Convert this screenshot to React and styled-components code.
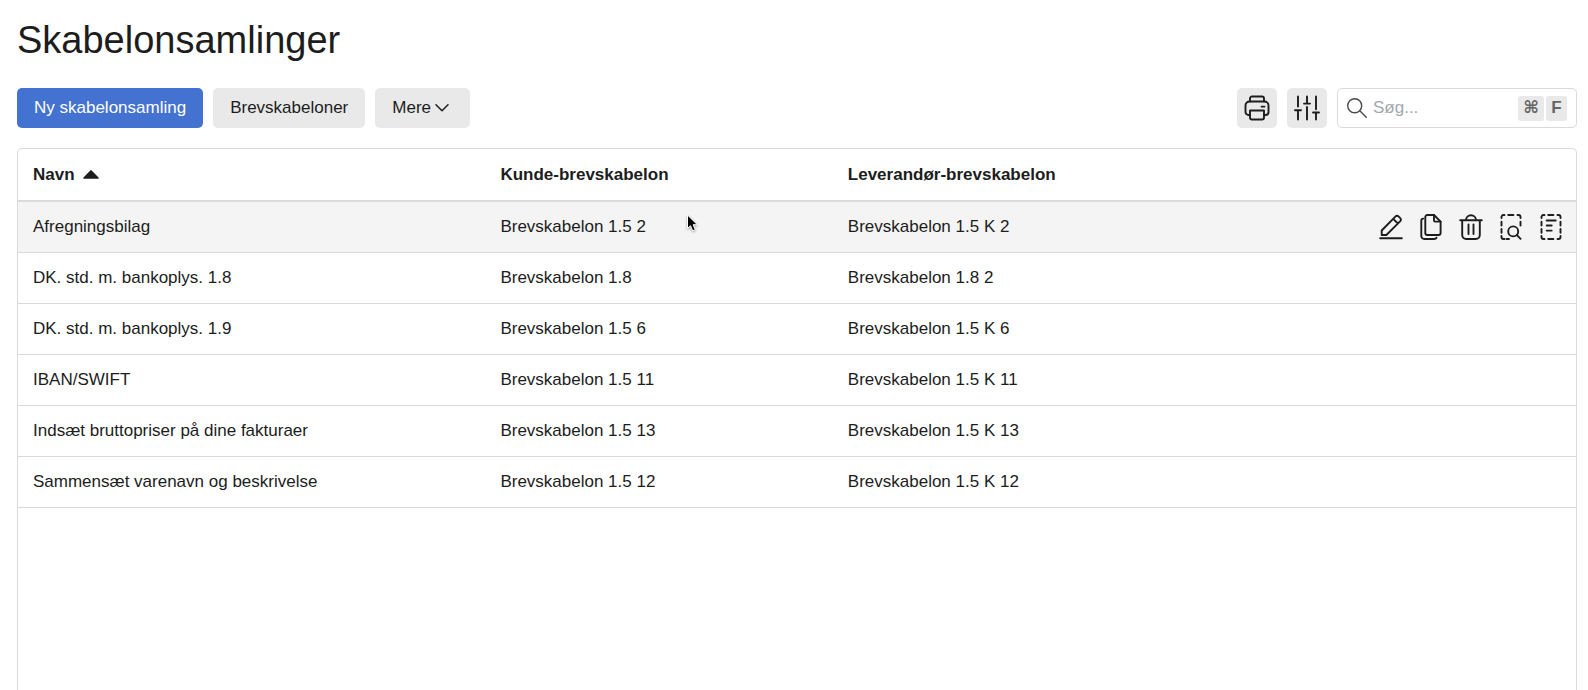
import React, { useState } from "react";
import styled, { createGlobalStyle, css } from "styled-components";

const color = {
  text: "#1c1d1c",
  line: "#dadada",
  control: "#e9e9e9",
  hover: "#f4f4f4",
  primary: "#4472d0",
  muted: "#a3a7af",
  icon: "#4a4a4a",
  key: "#666666",
};

const GlobalStyle = createGlobalStyle`
  *, *::before, *::after { box-sizing: border-box; }
  body {
    margin: 0;
    background: #fff;
    color: ${color.text};
    font: 17px/24px "Liberation Sans", Helvetica, Arial, sans-serif;
  }
  button, input { font: inherit; color: inherit; }
`;

const Page = styled.main`
  display: flex;
  flex-direction: column;
  min-height: 100vh;
  padding: 16px 11px 0 17px;
`;

const Title = styled.h1`
  margin: 0 0 24px;
  font-size: 38px;
  line-height: 48px;
  font-weight: 400;
`;

const Toolbar = styled.div`
  display: flex;
  justify-content: space-between;
  margin-bottom: 20px;
`;

const Group = styled.div`
  display: flex;
  gap: 10px;
`;

const Button = styled.button`
  display: flex;
  align-items: center;
  gap: 4px;
  height: 40px;
  padding: 0 ${(p) => (p.$menu ? 21 : 17)}px 0 17px;
  border: 0;
  border-radius: 5px;
  cursor: pointer;
  background: ${(p) => (p.$primary ? color.primary : color.control)};
  ${(p) => p.$primary && css`color: #fff;`}
`;

const IconButton = styled.button`
  display: grid;
  place-items: center;
  width: 40px;
  height: 40px;
  padding: 0;
  border: 0;
  border-radius: 5px;
  cursor: pointer;
  background: ${(p) => (p.$plain ? "transparent" : color.control)};
`;

const Icon = styled.svg`
  display: block;
  flex: none;
  fill: none;
  stroke: ${(p) => p.$stroke || "currentColor"};
  stroke-width: ${(p) => p.$weight || 1.9};
  stroke-linecap: round;
  stroke-linejoin: round;
`;

const SearchField = styled.label`
  display: flex;
  align-items: center;
  gap: 6px;
  width: 240px;
  height: 40px;
  padding: 0 9px;
  border: 1px solid ${color.line};
  border-radius: 5px;
`;

const SearchInput = styled.input`
  flex: 1;
  min-width: 0;
  padding: 0;
  border: 0;
  outline: 0;
  background: transparent;
  &::placeholder { color: ${color.muted}; opacity: 1; }
`;

const Keys = styled.span`
  display: flex;
  gap: 2px;
`;

const Key = styled.kbd`
  display: grid;
  place-items: center;
  min-width: 21px;
  height: 25px;
  padding: 0 5px;
  border-radius: 3px;
  background: ${color.control};
  color: ${color.key};
  font: bold 17px/24px "Liberation Sans", "DejaVu Sans", sans-serif;
`;

const Panel = styled.section`
  flex: 1;
  border: 1px solid ${color.line};
  border-bottom: 0;
  border-radius: 5px 5px 0 0;
`;

const Table = styled.table`
  width: 100%;
  table-layout: fixed;
  border-collapse: separate;
  border-spacing: 0;
`;

const Col = styled.col`
  width: ${(p) => p.$width};
`;

const HeadCell = styled.th`
  height: 53px;
  padding: 0 15px;
  border-bottom: 2px solid ${color.line};
  text-align: left;
  font-weight: 700;
`;

const SortButton = styled.button`
  display: flex;
  align-items: center;
  gap: 8px;
  padding: 0;
  border: 0;
  background: none;
  font-weight: 700;
  cursor: pointer;
`;

const Row = styled.tr`
  background: ${(p) => (p.$active ? color.hover : "transparent")};
`;

const Cell = styled.td`
  height: 51px;
  padding: 0 15px;
  border-bottom: 1px solid ${color.line};
`;

const ActionCell = styled(Cell)`
  padding: 0 5px;
`;

const Actions = styled.div`
  display: flex;
  justify-content: flex-end;
`;

const Pointer = styled.svg`
  position: absolute;
  left: 685px;
  top: 213px;
  pointer-events: none;
  filter: drop-shadow(0 1px 1px rgba(0, 0, 0, 0.35));
`;

const ChevronIcon = () => (
  <Icon width="14" height="10" viewBox="0 0 14 10" $weight={1.5} aria-hidden="true">
    <path d="M1 1.8l6 6 6-6" />
  </Icon>
);

const PrintIcon = () => (
  <Icon width="26" height="26" viewBox="-1 -1 26 26" aria-hidden="true">
    <path d="M5 5.5V2.5a2 2 0 0 1 2-2h10a2 2 0 0 1 2 2v3" />
    <path d="M5 19H3.5a3 3 0 0 1-3-3V9.5a4 4 0 0 1 4-4h15a4 4 0 0 1 4 4V16a3 3 0 0 1-3 3H19" />
    <path d="M5 14.5h14v7a2 2 0 0 1-2 2H7a2 2 0 0 1-2-2zM16.5 10.6h3" />
  </Icon>
);

const SlidersIcon = () => (
  <Icon width="26" height="26" viewBox="-1 -1 26 26" aria-hidden="true">
    <path d="M3 .5v10M0 14.2h6M3 14.2v9.3" />
    <path d="M12 .5v7M9 7.6h6M12 11v12.500" />
    <path d="M21 .5v12.800M18 16.500h6M21 16.500v7" />
  </Icon>
);

const SearchIcon = () => (
  <Icon width="20" height="20" viewBox="0 0 20 20" $weight={1.4} $stroke={color.icon} aria-hidden="true">
    <circle cx="7.700" cy="7.700" r="7" />
    <path d="M12.800 12.800l6.400 6.400" />
  </Icon>
);

const SortIcon = () => (
  <svg width="16" height="9" viewBox="0 0 16 9" aria-hidden="true">
    <path d="M7.300.4L.5 7.600c-.4.5-.2 1.100.4 1.100h14.200c.6 0 .8-.6.4-1.100L8.700.4a1 1 0 0 0-1.400 0z" fill="currentColor" />
  </svg>
);

const ActionIcon = ({ children }) => (
  <Icon width="24" height="26" viewBox="0 0 24 26" aria-hidden="true">{children}</Icon>
);

const dashedFrame =
  "M2.500 4V3a2 2 0 0 1 2-2h1M9.200 1h5.200M18.500 1h1a2 2 0 0 1 2 2v1M2.500 7.800v3.800M2.500 15v3.800M2.500 22v1a2 2 0 0 0 2 2h1M21.500 7.800v3.800";

const actions = [
  {
    label: "Rediger",
    drawing: <path d="M1.200 24.300h21.600M2.700 21v-4.500L16.600 2.400a2 2 0 0 1 2.900 0l1.800 1.800a2 2 0 0 1 0 2.900L7.400 21zM14.200 4.800l4.700 4.700" />,
  },
  {
    label: "Kopiér",
    drawing: (
      <>
        <path d="M8.300 1H15l6.600 6.600V19a2 2 0 0 1-2 2H8.300a2 2 0 0 1-2-2V3a2 2 0 0 1 2-2z" />
        <path d="M15 1v5.600a1 1 0 0 0 1 1h5.600M4.200 4.600a2 2 0 0 0-1.900 2v15.400a3 3 0 0 0 3 3h10a2.500 2.500 0 0 0 2.200-1.300" />
      </>
    ),
  },
  {
    label: "Slet",
    drawing: <path d="M1.200 6.300h21.600M7 6.300a5 5 0 0 1 10 0M3.200 6.300V21a4 4 0 0 0 4 4h9.600a4 4 0 0 0 4-4V6.300M9.500 10.500v9.500M14.500 10.500v9.500" />,
  },
  {
    label: "Vis",
    drawing: (
      <>
        <path d={dashedFrame} />
        <path d="M7.500 25h2.500" />
        <circle cx="14.200" cy="17.400" r="5" />
        <path d="M17.900 21.100l3.700 3.700" />
      </>
    ),
  },
  {
    label: "Detaljer",
    drawing: (
      <path d={dashedFrame + "M21.500 15v3.800M21.500 22v1a2 2 0 0 1-2 2h-1M9.200 25h5.200M7.700 6.500h9M7.700 11.500h5M7.700 16.600h5"} />
    ),
  },
];

const rows = [
  ["Afregningsbilag", "Brevskabelon 1.5 2", "Brevskabelon 1.5 K 2"],
  ["DK. std. m. bankoplys. 1.8", "Brevskabelon 1.8", "Brevskabelon 1.8 2"],
  ["DK. std. m. bankoplys. 1.9", "Brevskabelon 1.5 6", "Brevskabelon 1.5 K 6"],
  ["IBAN/SWIFT", "Brevskabelon 1.5 11", "Brevskabelon 1.5 K 11"],
  ["Indsæt bruttopriser på dine fakturaer", "Brevskabelon 1.5 13", "Brevskabelon 1.5 K 13"],
  ["Sammensæt varenavn og beskrivelse", "Brevskabelon 1.5 12", "Brevskabelon 1.5 K 12"],
];

export default function App() {
  const [active, setActive] = useState(0);

  return (
    <Page>
      <GlobalStyle />
      <Title>Skabelonsamlinger</Title>
      <Toolbar>
        <Group>
          <Button $primary>Ny skabelonsamling</Button>
          <Button>Brevskabeloner</Button>
          <Button $menu aria-haspopup="menu">
            Mere
            <ChevronIcon />
          </Button>
        </Group>
        <Group>
          <IconButton aria-label="Udskriv"><PrintIcon /></IconButton>
          <IconButton aria-label="Indstillinger"><SlidersIcon /></IconButton>
          <SearchField>
            <SearchIcon />
            <SearchInput type="text" placeholder="Søg..." aria-label="Søg" />
            <Keys>
              <Key>⌘</Key>
              <Key>F</Key>
            </Keys>
          </SearchField>
        </Group>
      </Toolbar>
      <Panel>
        <Table>
          <colgroup>
            <Col $width="30%" />
            <Col $width="22.3%" />
            <Col $width="29%" />
            <Col />
          </colgroup>
          <thead>
            <tr>
              <HeadCell aria-sort="ascending">
                <SortButton>
                  Navn
                  <SortIcon />
                </SortButton>
              </HeadCell>
              <HeadCell>Kunde-brevskabelon</HeadCell>
              <HeadCell>Leverandør-brevskabelon</HeadCell>
              <HeadCell aria-label="Handlinger" />
            </tr>
          </thead>
          <tbody>
            {rows.map(([name, customer, supplier], index) => (
              <Row key={name} $active={index === active} onMouseEnter={() => setActive(index)}>
                <Cell>{name}</Cell>
                <Cell>{customer}</Cell>
                <Cell>{supplier}</Cell>
                <ActionCell>
                  {index === active && (
                    <Actions>
                      {actions.map(({ label, drawing }) => (
                        <IconButton key={label} $plain aria-label={label}>
                          <ActionIcon>{drawing}</ActionIcon>
                        </IconButton>
                      ))}
                    </Actions>
                  )}
                </ActionCell>
              </Row>
            ))}
          </tbody>
        </Table>
      </Panel>
      <Pointer width="16" height="22" viewBox="0 0 16 22" aria-hidden="true">
        <path d="M2.500 2v13.500l3-2.800 2.200 5.100 2.600-1.100-2.200-5h4.200z" fill="#000" stroke="#fff" strokeWidth="1" />
      </Pointer>
    </Page>
  );
}
